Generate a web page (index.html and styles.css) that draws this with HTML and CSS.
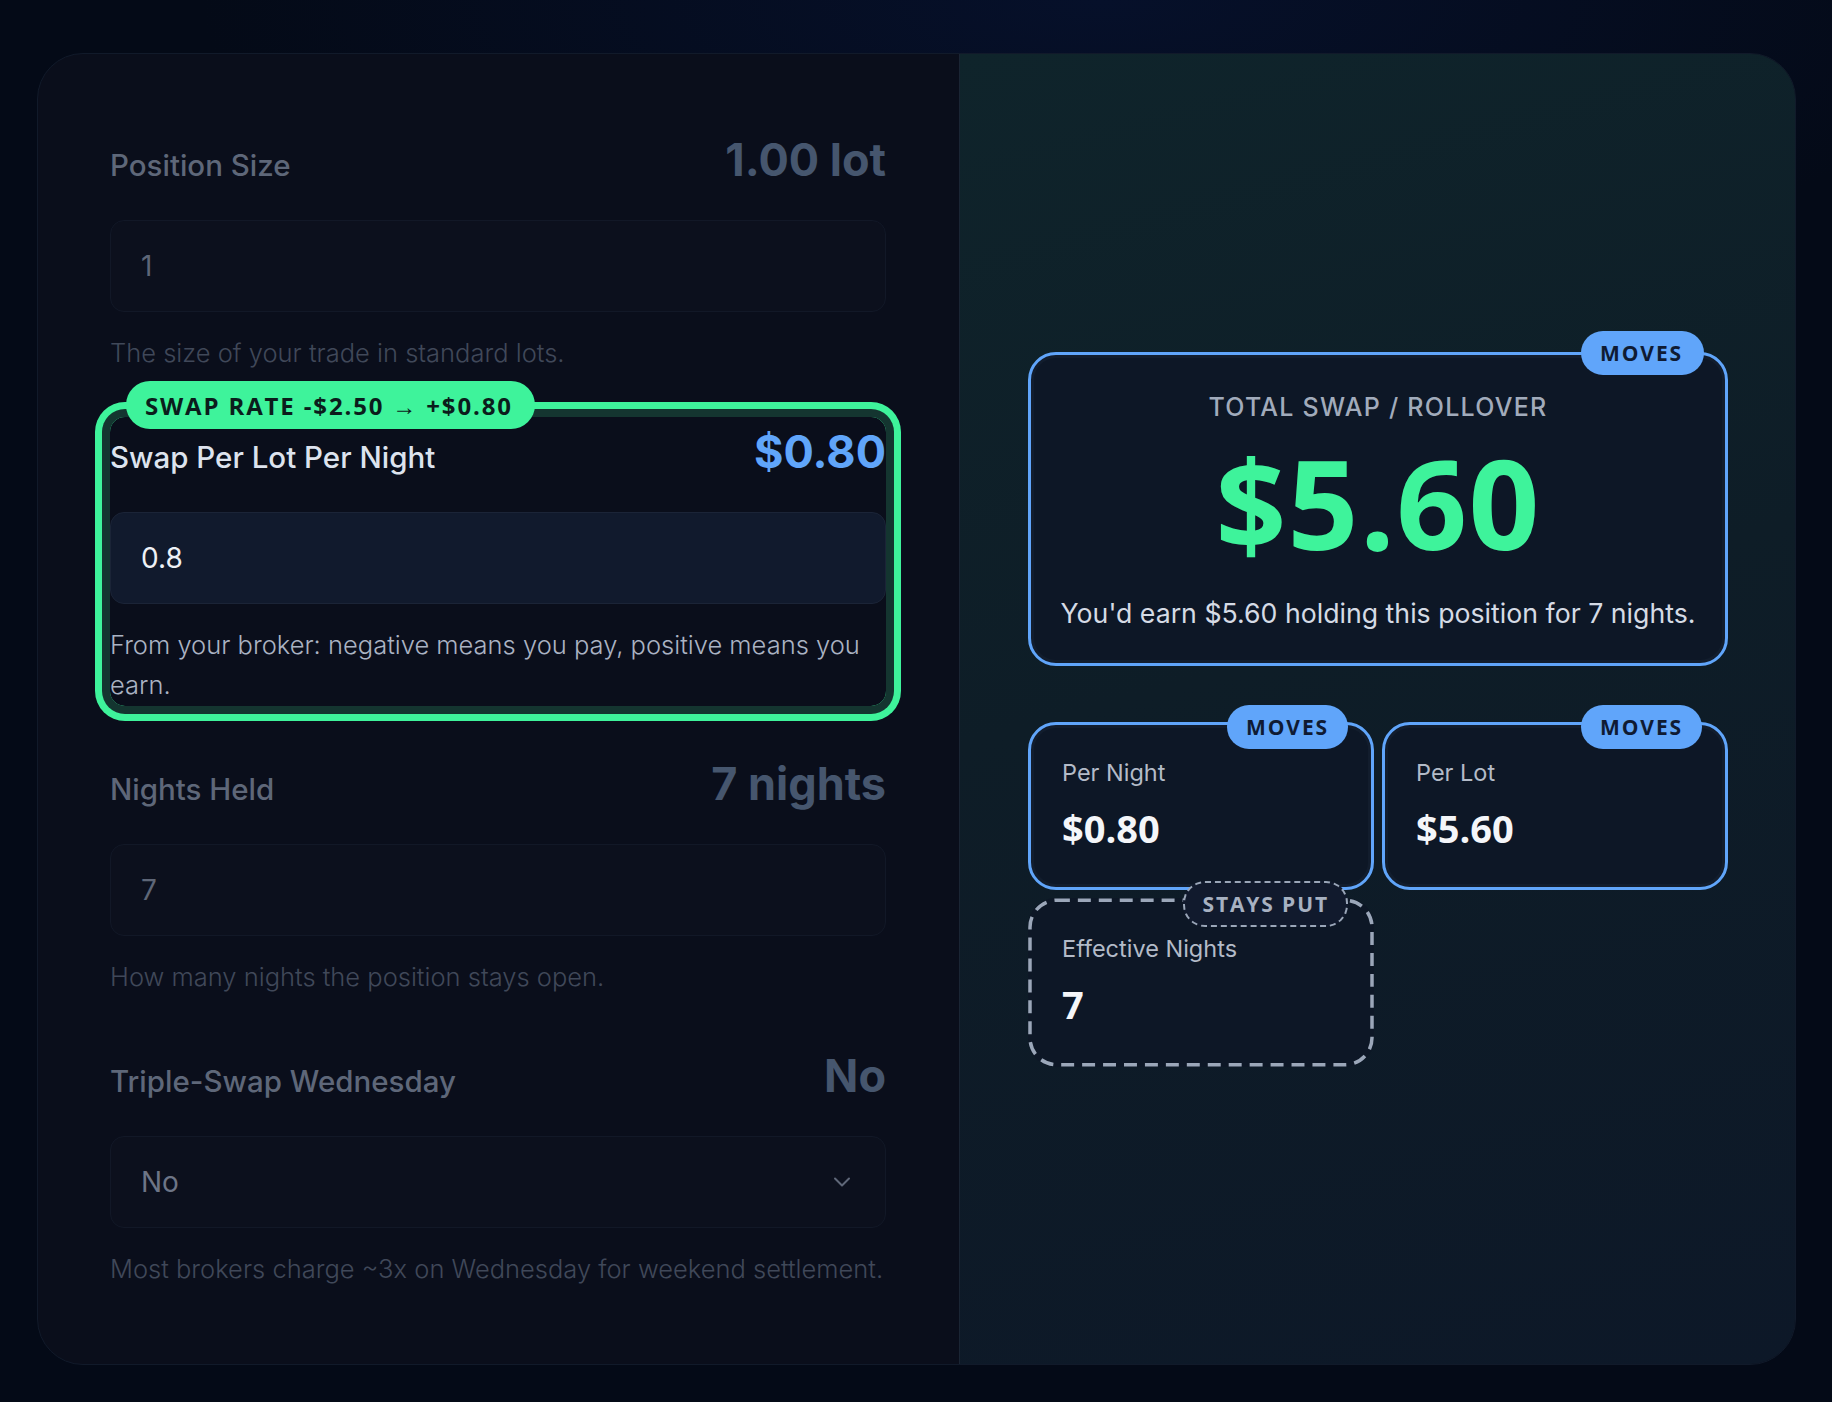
FILE: index.html
```html
<!DOCTYPE html>
<html lang="en">
<head>
<meta charset="utf-8">
<title>Swap / Rollover Calculator</title>
<link rel="stylesheet" href="styles.css">
</head>
<body>
<div class="page">
  <div class="card">
    <section class="inputs">
      <div class="field dim">
        <div class="field-head">
          <span class="field-label">Position Size</span>
          <span class="field-value">1.00 lot</span>
        </div>
        <div class="control">1</div>
        <p class="hint">The size of your trade in standard lots.</p>
      </div>

      <div class="field active">
        <span class="change-pill">SWAP RATE -$2.50 → +$0.80</span>
        <div class="field-head">
          <span class="field-label">Swap Per Lot Per Night</span>
          <span class="field-value">$0.80</span>
        </div>
        <div class="control">0.8</div>
        <p class="hint">From your broker: negative means you pay, positive means you earn.</p>
      </div>

      <div class="field dim">
        <div class="field-head">
          <span class="field-label">Nights Held</span>
          <span class="field-value">7 nights</span>
        </div>
        <div class="control">7</div>
        <p class="hint">How many nights the position stays open.</p>
      </div>

      <div class="field dim">
        <div class="field-head">
          <span class="field-label">Triple-Swap Wednesday</span>
          <span class="field-value">No</span>
        </div>
        <div class="control select">
          <span class="select-text">No</span>
          <svg class="chevron" width="18" height="10" viewBox="0 0 18 10"><path d="M2 1.5 L9 8.5 L16 1.5" fill="none" stroke="#5f6778" stroke-width="2" stroke-linecap="round" stroke-linejoin="round"/></svg>
        </div>
        <p class="hint">Most brokers charge ~3x on Wednesday for weekend settlement.</p>
      </div>
    </section>

    <section class="results">
      <div class="total moves-box">
        <span class="tag tag-moves tag-main">MOVES</span>
        <div class="total-label">TOTAL SWAP / ROLLOVER</div>
        <div class="total-value">$5.60</div>
        <div class="total-sub">You'd earn $5.60 holding this position for 7 nights.</div>
      </div>
      <div class="stats">
        <div class="stat moves-box">
          <span class="tag tag-moves">MOVES</span>
          <div class="stat-label">Per Night</div>
          <div class="stat-value">$0.80</div>
        </div>
        <div class="stat moves-box">
          <span class="tag tag-moves">MOVES</span>
          <div class="stat-label">Per Lot</div>
          <div class="stat-value">$5.60</div>
        </div>
        <div class="stat still-box">
          <svg class="dash-frame" width="347" height="169" viewBox="0 0 347 169"><rect x="2" y="2" width="343" height="165" rx="27" ry="27" fill="none" stroke="#9ba7b9" stroke-width="3.5" stroke-dasharray="13 8"/></svg>
          <span class="tag tag-still">STAYS PUT</span>
          <div class="stat-label">Effective Nights</div>
          <div class="stat-value">7</div>
        </div>
      </div>
    </section>
  </div>
</div>
</body>
</html>
```

FILE: styles.css
```css
* { box-sizing: border-box; }

html, body {
  margin: 0;
  padding: 0;
}

body {
  width: 1832px;
  height: 1402px;
  overflow: hidden;
  background: radial-gradient(ellipse 900px 300px at 1100px 0px, #06102a 0%, rgba(6,16,42,0) 100%), #040a17;
  font-family: Inter, "Noto Sans", sans-serif;
}

.page {
  padding: 53px 0 0 37px;
}

.card {
  width: 1759px;
  height: 1312px;
  display: grid;
  grid-template-columns: 921px 1fr;
  border-radius: 46px;
  border: 1px solid #111a2a;
  overflow: hidden;
  background: #0a0e1b;
}

/* ---------- left: inputs ---------- */
.inputs {
  padding: 79px 73px 72px 72px;
  display: flex;
  flex-direction: column;
  gap: 52px;
}

.field {
  position: relative;
  display: flex;
  flex-direction: column;
}

.field-head {
  display: flex;
  justify-content: space-between;
  align-items: baseline;
  height: 53px;
}

.field-label {
  font-size: 29.5px;
  font-weight: 500;
}

.field-value {
  font-size: 45px;
  font-weight: 700;
  line-height: 53px;
}

.control {
  margin-top: 34px;
  height: 92px;
  border-radius: 14px;
  padding: 0 30px;
  display: flex;
  align-items: center;
  font-size: 28px;
  font-weight: 400;
}

.select {
  justify-content: space-between;
  padding-right: 34px;
}

.hint {
  margin: 21px 0 0;
  font-size: 25.5px;
  font-weight: 300;
  line-height: 40px;
}

.dim .field-label { color: #5e6779; }
.dim .field-value { color: #46566e; }
.dim .control {
  background: #0c101d;
  border: 1px solid #121827;
  color: #5e6677;
}
.dim .select-text { color: #6d7586; }
.dim .hint { color: #404859; }

.active::before {
  content: "";
  position: absolute;
  top: -8px;
  bottom: -1px;
  left: 0;
  right: 0;
  border-radius: 15px;
  box-shadow: 0 0 0 8px #143530, 0 0 0 15px #3ef39b;
  pointer-events: none;
}
.active .field-label { color: #dde3ee; }
.active .field-value { color: #60a5fa; }
.active .control {
  background: #111a2d;
  border: 1px solid #1b2437;
  color: #eef1f6;
}
.active .hint { color: #aab3c3; }

.change-pill {
  position: absolute;
  top: -44px;
  left: 16px;
  z-index: 2;
  height: 48px;
  padding: 0 22px 0 19px;
  display: flex;
  align-items: center;
  border-radius: 24px;
  background: #3ef39b;
  color: #0b1d1c;
  font-family: "Open Sans", sans-serif;
  font-size: 24px;
  font-weight: 700;
  letter-spacing: 0.077em;
  white-space: nowrap;
}

/* ---------- right: results ---------- */
.results {
  border-left: 1px solid #1a2534;
  background: linear-gradient(165deg, #0f242b 0%, #0e1d27 45%, #0d1828 100%);
  padding: 0 67px 0 68px;
  display: flex;
  flex-direction: column;
  justify-content: center;
}

.moves-box,
.still-box {
  position: relative;
  border-radius: 28px;
  background: #0d1726;
}

.moves-box {
  border: 3px solid #60a5fa;
  box-shadow: inset 0 0 0 3px #121d2d;
}

.dash-frame {
  position: absolute;
  top: 0;
  left: 0;
  width: 100%;
  height: 100%;
  pointer-events: none;
}

.tag {
  position: absolute;
  top: -20px;
  right: 23px;
  height: 44px;
  padding: 0 19px;
  border-radius: 22px;
  display: flex;
  align-items: center;
  font-family: "Open Sans", sans-serif;
  font-size: 21px;
  font-weight: 700;
  letter-spacing: 0.09em;
  white-space: nowrap;
}

.tag-main {
  top: -24px;
  right: 21px;
  padding: 0 21px 0 19px;
}

.tag-moves {
  background: #60a5fa;
  color: #0f1b33;
}

.tag-still {
  top: -17px;
  right: 26px;
  height: 46px;
  padding: 0 17px;
  background: #111a2d;
  border: 2px dashed #9aa6b8;
  color: #a7b1c1;
}

.total {
  height: 314px;
  padding: 36px 20px 0;
  text-align: center;
}

.total-label {
  font-size: 25px;
  font-weight: 500;
  line-height: 32px;
  letter-spacing: 0.05em;
  color: #a1abbb;
}

.total-value {
  margin-top: 17px;
  font-family: "Open Sans", sans-serif;
  font-size: 124px;
  font-weight: 700;
  line-height: 124px;
  letter-spacing: 0.01em;
  color: #3ef39b;
}

.total-sub {
  margin-top: 31px;
  font-size: 26.7px;
  font-weight: 400;
  line-height: 36px;
  color: #d5dbe5;
}

.stats {
  margin-top: 56px;
  display: grid;
  grid-template-columns: 1fr 1fr;
  gap: 8px;
}

.stat {
  height: 168px;
  padding: 33px 31px 0;
}

.still-box {
  height: 169px;
  padding: 36px 34px 0;
}

.stat-label {
  font-size: 23.5px;
  font-weight: 400;
  line-height: 30px;
  color: #b3bbc8;
}

.stat-value {
  margin-top: 17px;
  font-family: "Open Sans", sans-serif;
  font-size: 38px;
  font-weight: 700;
  line-height: 46px;
  color: #f4f6f9;
}
```
